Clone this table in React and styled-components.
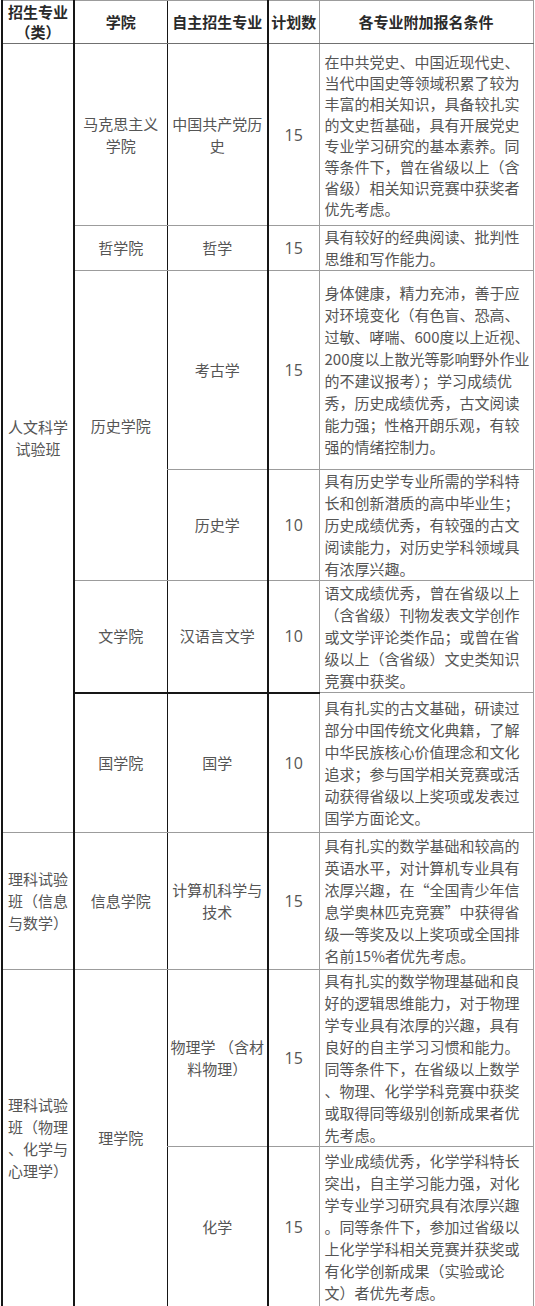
import React from 'react';
import styled, { createGlobalStyle, css } from 'styled-components';

const Global = createGlobalStyle`
  html, body { margin: 0; padding: 0; background: #fff; }
  body {
    font-family: "Noto Sans CJK SC", "Noto Sans", sans-serif;
    -webkit-font-smoothing: antialiased;
  }
`;

const DARK = '#161616';
const GRAY = '#9c9c9c';

const Table = styled.table`
  border-collapse: collapse;
  table-layout: fixed;
  width: 532px;
  margin-left: 1px;
  border-top: 1px solid #6a6a6a;
  border-bottom: 2px solid ${DARK};
  border-right: 1px solid ${GRAY};
  border-left: 2px solid ${DARK};
`;

const Col = styled.col`
  width: ${(p) => p.$w}px;
`;

const Row = styled.tr`
  height: ${(p) => p.$h}px;
`;

const leftBorder = {
  1: `2px solid ${DARK}`,
  2: `2px solid ${DARK}`,
  3: `1px solid ${DARK}`,
  4: `2px solid ${DARK}`,
  5: `1px solid ${GRAY}`,
};

const cellBase = css`
  padding: 0 ${(p) => (p.$col === 5 ? '4px 0 5px' : '0')};
  vertical-align: middle;
  text-align: ${(p) => (p.$col === 5 ? 'left' : 'center')};
  border-left: ${(p) => leftBorder[p.$col]};
  border-top: ${(p) => (p.$heavyTop ? `2px solid ${DARK}` : `1px solid ${GRAY}`)};
  border-bottom: 1px solid ${GRAY};
  overflow: visible;
`;

const Head = styled.th`
  ${cellBase};
  padding: 0;
  text-align: center;
  font-weight: 700;
  font-size: 15px;
  line-height: 20px;
  color: #2a2a2a;
  border-bottom: 1px solid #707070;
`;

const Cell = styled.td`
  ${cellBase};
  font-size: 15px;
  line-height: ${(p) => p.$lh || 22}px;
  color: #555;
`;

const Num = styled.td`
  ${cellBase};
  font-family: "Open Sans", "Noto Sans", sans-serif;
  font-size: 16px;
  color: #555;
  border-top: ${(p) => (p.$heavyTop ? `2px solid ${DARK}` : `1px solid ${GRAY}`)};
`;

const Line = styled.span`
  display: block;
  white-space: nowrap;
`;

const Lines = ({ lines }) => lines.map((l, i) => <Line key={i}>{l}</Line>);

export default function App() {
  return (
    <>
      <Global />
      <Table>
        <colgroup>
          <Col $w={72} />
          <Col $w={93} />
          <Col $w={101} />
          <Col $w={51} />
          <Col $w={214} />
        </colgroup>
        <thead>
          <Row $h={43}>
            <Head $col={1}><Lines lines={['招生专业', '（类）']} /></Head>
            <Head $col={2}>学院</Head>
            <Head $col={3}>自主招生专业</Head>
            <Head $col={4}>计划数</Head>
            <Head $col={5}>各专业附加报名条件</Head>
          </Row>
        </thead>
        <tbody>
          <Row $h={182}>
            <Cell $col={1} rowSpan={6}><Lines lines={['人文科学', '试验班']} /></Cell>
            <Cell $col={2}><Lines lines={['马克思主义', '学院']} /></Cell>
            <Cell $col={3}><Lines lines={['中国共产党历', '史']} /></Cell>
            <Num $col={4}>15</Num>
            <Cell $col={5} $lh={21}>
              <Lines
                lines={[
                  '在中共党史、中国近现代史、',
                  '当代中国史等领域积累了较为',
                  '丰富的相关知识，具备较扎实',
                  '的文史哲基础，具有开展党史',
                  '专业学习研究的基本素养。同',
                  '等条件下，曾在省级以上（含',
                  '省级）相关知识竞赛中获奖者',
                  '优先考虑。',
                ]}
              />
            </Cell>
          </Row>
          <Row $h={42}>
            <Cell $col={2}>哲学院</Cell>
            <Cell $col={3}>哲学</Cell>
            <Num $col={4}>15</Num>
            <Cell $col={5}>
              <Lines lines={['具有较好的经典阅读、批判性', '思维和写作能力。']} />
            </Cell>
          </Row>
          <Row $h={199}>
            <Cell $col={2} rowSpan={2}>历史学院</Cell>
            <Cell $col={3}>考古学</Cell>
            <Num $col={4}>15</Num>
            <Cell $col={5}>
              <Lines
                lines={[
                  '身体健康，精力充沛，善于应',
                  '对环境变化（有色盲、恐高、',
                  '过敏、哮喘、600度以上近视、',
                  '200度以上散光等影响野外作业',
                  '的不建议报考）；学习成绩优',
                  '秀，历史成绩优秀，古文阅读',
                  '能力强；性格开朗乐观，有较',
                  '强的情绪控制力。',
                ]}
              />
            </Cell>
          </Row>
          <Row $h={110}>
            <Cell $col={3}>历史学</Cell>
            <Num $col={4}>10</Num>
            <Cell $col={5}>
              <Lines
                lines={[
                  '具有历史学专业所需的学科特',
                  '长和创新潜质的高中毕业生；',
                  '历史成绩优秀，有较强的古文',
                  '阅读能力，对历史学科领域具',
                  '有浓厚兴趣。',
                ]}
              />
            </Cell>
          </Row>
          <Row $h={112}>
            <Cell $col={2}>文学院</Cell>
            <Cell $col={3}>汉语言文学</Cell>
            <Num $col={4}>10</Num>
            <Cell $col={5}>
              <Lines
                lines={[
                  '语文成绩优秀，曾在省级以上',
                  '（含省级）刊物发表文学创作',
                  '或文学评论类作品；或曾在省',
                  '级以上（含省级）文史类知识',
                  '竞赛中获奖。',
                ]}
              />
            </Cell>
          </Row>
          <Row $h={140}>
            <Cell $col={2} $heavyTop>国学院</Cell>
            <Cell $col={3} $heavyTop>国学</Cell>
            <Num $col={4} $heavyTop>10</Num>
            <Cell $col={5}>
              <Lines
                lines={[
                  '具有扎实的古文基础，研读过',
                  '部分中国传统文化典籍，了解',
                  '中华民族核心价值理念和文化',
                  '追求；参与国学相关竞赛或活',
                  '动获得省级以上奖项或发表过',
                  '国学方面论文。',
                ]}
              />
            </Cell>
          </Row>
          <Row $h={137}>
            <Cell $col={1}><Lines lines={['理科试验', '班（信息', '与数学）']} /></Cell>
            <Cell $col={2}>信息学院</Cell>
            <Cell $col={3}><Lines lines={['计算机科学与', '技术']} /></Cell>
            <Num $col={4}>15</Num>
            <Cell $col={5}>
              <Lines
                lines={[
                  '具有扎实的数学基础和较高的',
                  '英语水平，对计算机专业具有',
                  '浓厚兴趣，在“全国青少年信',
                  '息学奥林匹克竞赛”中获得省',
                  '级一等奖及以上奖项或全国排',
                  '名前15%者优先考虑。',
                ]}
              />
            </Cell>
          </Row>
          <Row $h={177}>
            <Cell $col={1} rowSpan={2}>
              <Lines lines={['理科试验', '班（物理', '、化学与', '心理学）']} />
            </Cell>
            <Cell $col={2} rowSpan={2}>理学院</Cell>
            <Cell $col={3}><Lines lines={['物理学 （含材', '料物理）']} /></Cell>
            <Num $col={4}>15</Num>
            <Cell $col={5}>
              <Lines
                lines={[
                  '具有扎实的数学物理基础和良',
                  '好的逻辑思维能力，对于物理',
                  '学专业具有浓厚的兴趣，具有',
                  '良好的自主学习习惯和能力。',
                  '同等条件下，在省级以上数学',
                  '、物理、化学学科竞赛中获奖',
                  '或取得同等级别创新成果者优',
                  '先考虑。',
                ]}
              />
            </Cell>
          </Row>
          <Row $h={161}>
            <Cell $col={3}>化学</Cell>
            <Num $col={4}>15</Num>
            <Cell $col={5}>
              <Lines
                lines={[
                  '学业成绩优秀，化学学科特长',
                  '突出，自主学习能力强，对化',
                  '学专业学习研究具有浓厚兴趣',
                  '。同等条件下，参加过省级以',
                  '上化学学科相关竞赛并获奖或',
                  '有化学创新成果（实验或论',
                  '文）者优先考虑。',
                ]}
              />
            </Cell>
          </Row>
        </tbody>
      </Table>
    </>
  );
}
